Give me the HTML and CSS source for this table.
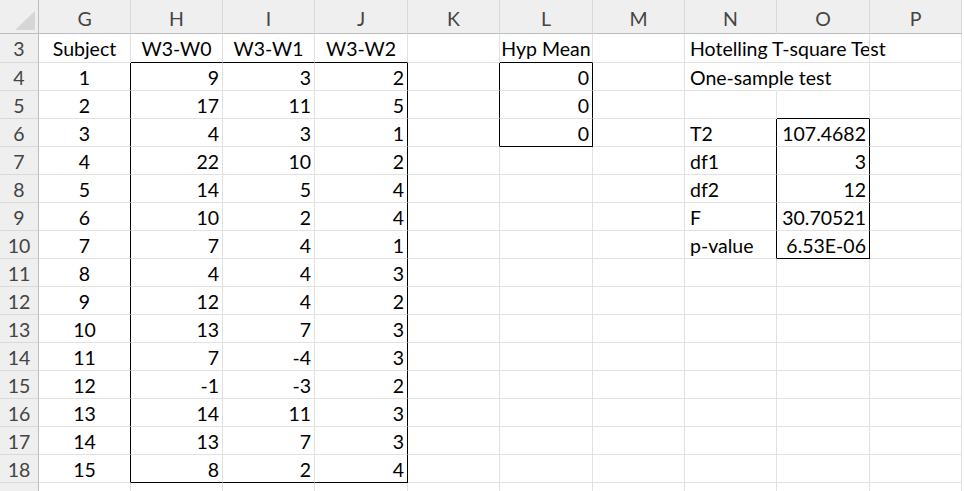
FILE: index.html
```html
<!DOCTYPE html>
<html>
<head>
<meta charset="utf-8">
<link rel="stylesheet" href="styles.css">
</head>
<body>
<div class="sheet">
  <div class="corner"><span class="tri"></span></div>
  <div class="ch">G</div><div class="ch">H</div><div class="ch">I</div><div class="ch">J</div><div class="ch">K</div><div class="ch">L</div><div class="ch">M</div><div class="ch">N</div><div class="ch">O</div><div class="ch">P</div>

  <div class="rh">3</div>
  <div class="c m">Subject</div><div class="c m bb">W3-W0</div><div class="c m bb">W3-W1</div><div class="c m bb">W3-W2</div><div class="c"></div><div class="c m bb">Hyp Mean</div><div class="c"></div><div class="c t nr">Hotelling T-square Test</div><div class="c"></div><div class="c"></div>

  <div class="rh">4</div>
  <div class="c m br">1</div><div class="c n">9</div><div class="c n">3</div><div class="c n br">2</div><div class="c br"></div><div class="c n br">0</div><div class="c"></div><div class="c t nr">One-sample test</div><div class="c"></div><div class="c"></div>

  <div class="rh">5</div>
  <div class="c m br">2</div><div class="c n">17</div><div class="c n">11</div><div class="c n br">5</div><div class="c br"></div><div class="c n br">0</div><div class="c"></div><div class="c"></div><div class="c bb"></div><div class="c"></div>

  <div class="rh">6</div>
  <div class="c m br">3</div><div class="c n">4</div><div class="c n">3</div><div class="c n br">1</div><div class="c br"></div><div class="c n br bb">0</div><div class="c"></div><div class="c t br">T2</div><div class="c n br">107.4682</div><div class="c"></div>

  <div class="rh">7</div>
  <div class="c m br">4</div><div class="c n">22</div><div class="c n">10</div><div class="c n br">2</div><div class="c"></div><div class="c"></div><div class="c"></div><div class="c t br">df1</div><div class="c n br">3</div><div class="c"></div>

  <div class="rh">8</div>
  <div class="c m br">5</div><div class="c n">14</div><div class="c n">5</div><div class="c n br">4</div><div class="c"></div><div class="c"></div><div class="c"></div><div class="c t br">df2</div><div class="c n br">12</div><div class="c"></div>

  <div class="rh">9</div>
  <div class="c m br">6</div><div class="c n">10</div><div class="c n">2</div><div class="c n br">4</div><div class="c"></div><div class="c"></div><div class="c"></div><div class="c t br">F</div><div class="c n br">30.70521</div><div class="c"></div>

  <div class="rh">10</div>
  <div class="c m br">7</div><div class="c n">7</div><div class="c n">4</div><div class="c n br">1</div><div class="c"></div><div class="c"></div><div class="c"></div><div class="c t br">p-value</div><div class="c n br bb">6.53E-06</div><div class="c"></div>

  <div class="rh">11</div>
  <div class="c m br">8</div><div class="c n">4</div><div class="c n">4</div><div class="c n br">3</div><div class="c"></div><div class="c"></div><div class="c"></div><div class="c"></div><div class="c"></div><div class="c"></div>

  <div class="rh">12</div>
  <div class="c m br">9</div><div class="c n">12</div><div class="c n">4</div><div class="c n br">2</div><div class="c"></div><div class="c"></div><div class="c"></div><div class="c"></div><div class="c"></div><div class="c"></div>

  <div class="rh">13</div>
  <div class="c m br">10</div><div class="c n">13</div><div class="c n">7</div><div class="c n br">3</div><div class="c"></div><div class="c"></div><div class="c"></div><div class="c"></div><div class="c"></div><div class="c"></div>

  <div class="rh">14</div>
  <div class="c m br">11</div><div class="c n">7</div><div class="c n">-4</div><div class="c n br">3</div><div class="c"></div><div class="c"></div><div class="c"></div><div class="c"></div><div class="c"></div><div class="c"></div>

  <div class="rh">15</div>
  <div class="c m br">12</div><div class="c n">-1</div><div class="c n">-3</div><div class="c n br">2</div><div class="c"></div><div class="c"></div><div class="c"></div><div class="c"></div><div class="c"></div><div class="c"></div>

  <div class="rh">16</div>
  <div class="c m br">13</div><div class="c n">14</div><div class="c n">11</div><div class="c n br">3</div><div class="c"></div><div class="c"></div><div class="c"></div><div class="c"></div><div class="c"></div><div class="c"></div>

  <div class="rh">17</div>
  <div class="c m br">14</div><div class="c n">13</div><div class="c n">7</div><div class="c n br">3</div><div class="c"></div><div class="c"></div><div class="c"></div><div class="c"></div><div class="c"></div><div class="c"></div>

  <div class="rh">18</div>
  <div class="c m br">15</div><div class="c n bb">8</div><div class="c n bb">2</div><div class="c n br bb">4</div><div class="c"></div><div class="c"></div><div class="c"></div><div class="c"></div><div class="c"></div><div class="c"></div>

  <div class="rh"></div>
  <div class="c"></div><div class="c"></div><div class="c"></div><div class="c"></div><div class="c"></div><div class="c"></div><div class="c"></div><div class="c"></div><div class="c"></div><div class="c"></div>
</div>
</body>
</html>
```

FILE: styles.css
```css
html, body {
  margin: 0;
  padding: 0;
  background: #ffffff;
  overflow: hidden;
}

.sheet {
  display: grid;
  grid-template-columns: 39px 92px 92px 92px 93px 92px 93px 92px 92px 93px 92px;
  grid-template-rows: 34px 29px;
  grid-auto-rows: 28px;
  width: 962px;
  font-family: Lato, "Liberation Sans", sans-serif;
  font-size: 19.5px;
  color: #000;
}

.corner {
  background: #efefef;
  border-right: 1px solid #bdbdbd;
  border-bottom: 1px solid #bdbdbd;
  box-sizing: border-box;
  display: flex;
  align-items: flex-end;
  justify-content: flex-end;
  padding: 0 3px 3px 0;
}

.tri {
  width: 0;
  height: 0;
  border-left: 20px solid transparent;
  border-bottom: 19px solid #d6d6d6;
}

.ch {
  background: #efefef;
  border-right: 1px solid #d9d9d9;
  border-bottom: 1px solid #bdbdbd;
  box-sizing: border-box;
  color: #444;
  text-align: center;
  padding-top: 8px;
  line-height: 22px;
}

.rh {
  background: #efefef;
  border-right: 1px solid #bdbdbd;
  border-bottom: 1px solid #d9d9d9;
  box-sizing: border-box;
  color: #444;
  text-align: center;
  line-height: 27px;
  padding-top: 1px;
}

.c {
  border-right: 1px solid #e1e1e1;
  border-bottom: 1px solid #e1e1e1;
  box-sizing: border-box;
  line-height: 27px;
  padding-top: 1px;
  white-space: nowrap;
  overflow: visible;
}

.n { text-align: right; padding-right: 3px; }
.m { text-align: center; }
.t { text-align: left; padding-left: 5px; }

.br { border-right-color: #000; }
.bb { border-bottom-color: #000; }
.nr { border-right-color: #ffffff; }
```
